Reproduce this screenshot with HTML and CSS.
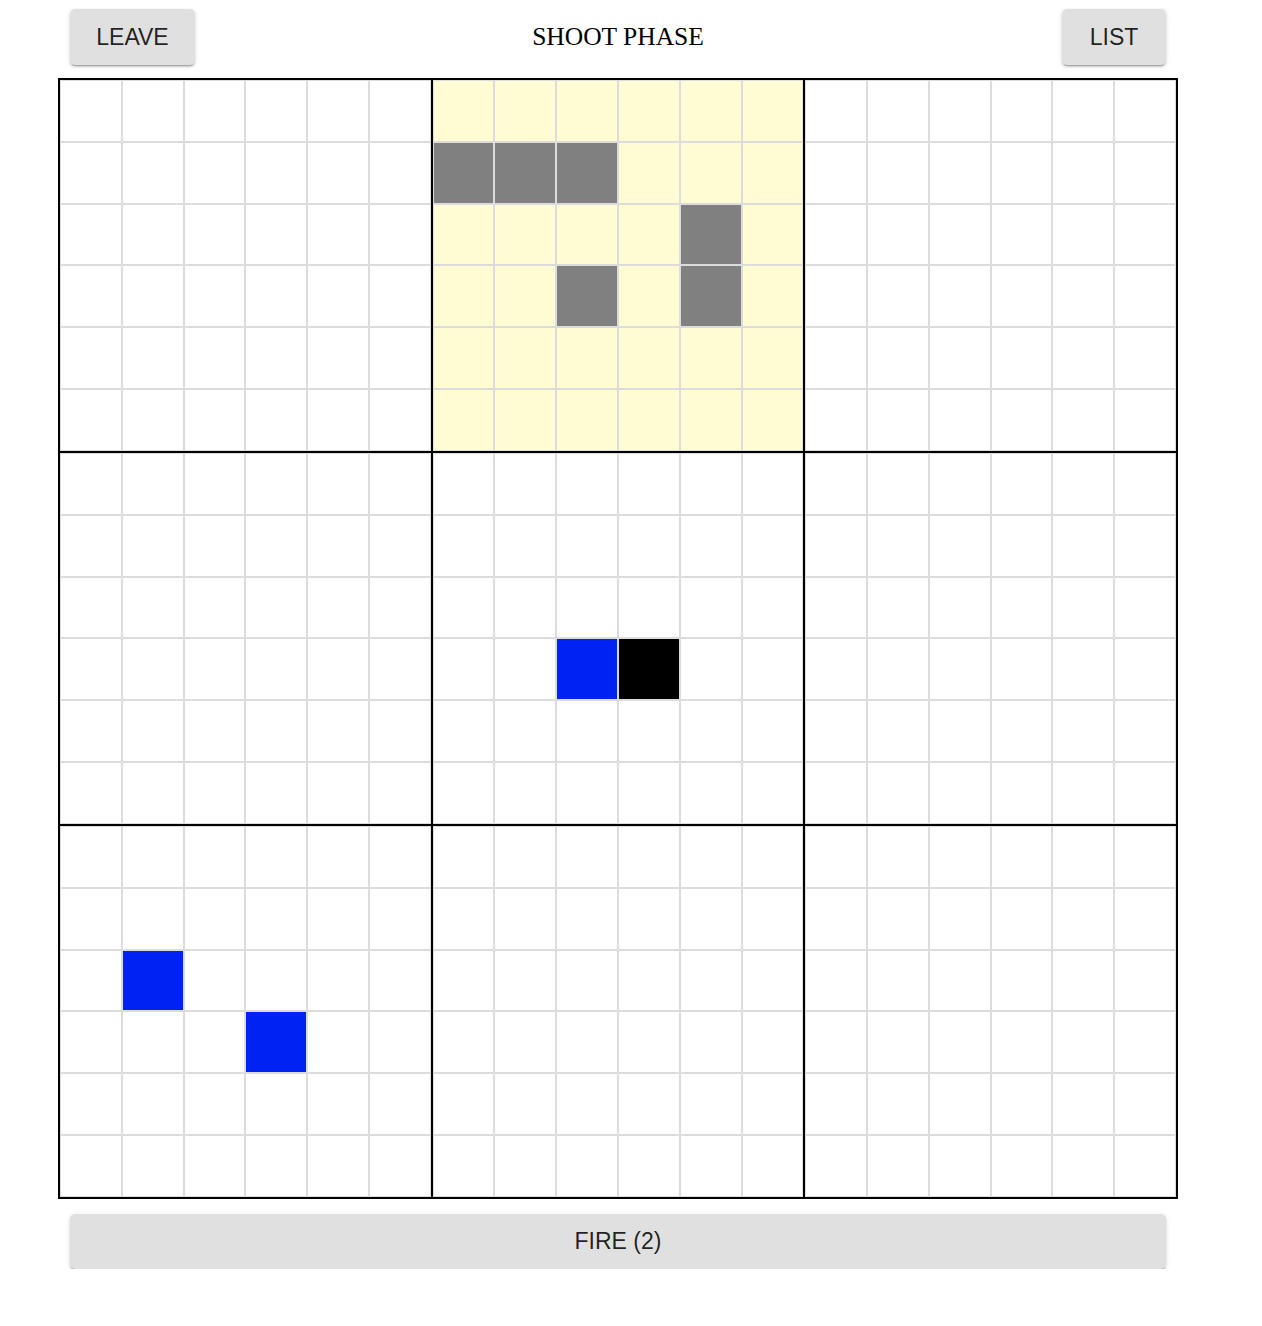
FILE: index.html
```html
<!DOCTYPE html>
<html>
<head>
<meta charset="utf-8">
<title>Shoot Phase</title>
<link rel="stylesheet" href="styles.css">
</head>
<body>
<div class="page">
  <div class="topbar">
    <button class="btn btn-leave">LEAVE</button>
    <div class="title">SHOOT PHASE</div>
    <button class="btn btn-list">LIST</button>
  </div>
  <div class="board">
    <div class="block">
      <div class="c"></div><div class="c"></div><div class="c"></div><div class="c"></div><div class="c"></div><div class="c"></div>
      <div class="c"></div><div class="c"></div><div class="c"></div><div class="c"></div><div class="c"></div><div class="c"></div>
      <div class="c"></div><div class="c"></div><div class="c"></div><div class="c"></div><div class="c"></div><div class="c"></div>
      <div class="c"></div><div class="c"></div><div class="c"></div><div class="c"></div><div class="c"></div><div class="c"></div>
      <div class="c"></div><div class="c"></div><div class="c"></div><div class="c"></div><div class="c"></div><div class="c"></div>
      <div class="c"></div><div class="c"></div><div class="c"></div><div class="c"></div><div class="c"></div><div class="c"></div>
    </div>
    <div class="block block-active">
      <div class="c"></div><div class="c"></div><div class="c"></div><div class="c"></div><div class="c"></div><div class="c"></div>
      <div class="c gray"></div><div class="c gray"></div><div class="c gray"></div><div class="c"></div><div class="c"></div><div class="c"></div>
      <div class="c"></div><div class="c"></div><div class="c"></div><div class="c"></div><div class="c gray"></div><div class="c"></div>
      <div class="c"></div><div class="c"></div><div class="c gray"></div><div class="c"></div><div class="c gray"></div><div class="c"></div>
      <div class="c"></div><div class="c"></div><div class="c"></div><div class="c"></div><div class="c"></div><div class="c"></div>
      <div class="c"></div><div class="c"></div><div class="c"></div><div class="c"></div><div class="c"></div><div class="c"></div>
    </div>
    <div class="block">
      <div class="c"></div><div class="c"></div><div class="c"></div><div class="c"></div><div class="c"></div><div class="c"></div>
      <div class="c"></div><div class="c"></div><div class="c"></div><div class="c"></div><div class="c"></div><div class="c"></div>
      <div class="c"></div><div class="c"></div><div class="c"></div><div class="c"></div><div class="c"></div><div class="c"></div>
      <div class="c"></div><div class="c"></div><div class="c"></div><div class="c"></div><div class="c"></div><div class="c"></div>
      <div class="c"></div><div class="c"></div><div class="c"></div><div class="c"></div><div class="c"></div><div class="c"></div>
      <div class="c"></div><div class="c"></div><div class="c"></div><div class="c"></div><div class="c"></div><div class="c"></div>
    </div>
    <div class="block">
      <div class="c"></div><div class="c"></div><div class="c"></div><div class="c"></div><div class="c"></div><div class="c"></div>
      <div class="c"></div><div class="c"></div><div class="c"></div><div class="c"></div><div class="c"></div><div class="c"></div>
      <div class="c"></div><div class="c"></div><div class="c"></div><div class="c"></div><div class="c"></div><div class="c"></div>
      <div class="c"></div><div class="c"></div><div class="c"></div><div class="c"></div><div class="c"></div><div class="c"></div>
      <div class="c"></div><div class="c"></div><div class="c"></div><div class="c"></div><div class="c"></div><div class="c"></div>
      <div class="c"></div><div class="c"></div><div class="c"></div><div class="c"></div><div class="c"></div><div class="c"></div>
    </div>
    <div class="block">
      <div class="c"></div><div class="c"></div><div class="c"></div><div class="c"></div><div class="c"></div><div class="c"></div>
      <div class="c"></div><div class="c"></div><div class="c"></div><div class="c"></div><div class="c"></div><div class="c"></div>
      <div class="c"></div><div class="c"></div><div class="c"></div><div class="c"></div><div class="c"></div><div class="c"></div>
      <div class="c"></div><div class="c"></div><div class="c blue"></div><div class="c black"></div><div class="c"></div><div class="c"></div>
      <div class="c"></div><div class="c"></div><div class="c"></div><div class="c"></div><div class="c"></div><div class="c"></div>
      <div class="c"></div><div class="c"></div><div class="c"></div><div class="c"></div><div class="c"></div><div class="c"></div>
    </div>
    <div class="block">
      <div class="c"></div><div class="c"></div><div class="c"></div><div class="c"></div><div class="c"></div><div class="c"></div>
      <div class="c"></div><div class="c"></div><div class="c"></div><div class="c"></div><div class="c"></div><div class="c"></div>
      <div class="c"></div><div class="c"></div><div class="c"></div><div class="c"></div><div class="c"></div><div class="c"></div>
      <div class="c"></div><div class="c"></div><div class="c"></div><div class="c"></div><div class="c"></div><div class="c"></div>
      <div class="c"></div><div class="c"></div><div class="c"></div><div class="c"></div><div class="c"></div><div class="c"></div>
      <div class="c"></div><div class="c"></div><div class="c"></div><div class="c"></div><div class="c"></div><div class="c"></div>
    </div>
    <div class="block">
      <div class="c"></div><div class="c"></div><div class="c"></div><div class="c"></div><div class="c"></div><div class="c"></div>
      <div class="c"></div><div class="c"></div><div class="c"></div><div class="c"></div><div class="c"></div><div class="c"></div>
      <div class="c"></div><div class="c blue"></div><div class="c"></div><div class="c"></div><div class="c"></div><div class="c"></div>
      <div class="c"></div><div class="c"></div><div class="c"></div><div class="c blue"></div><div class="c"></div><div class="c"></div>
      <div class="c"></div><div class="c"></div><div class="c"></div><div class="c"></div><div class="c"></div><div class="c"></div>
      <div class="c"></div><div class="c"></div><div class="c"></div><div class="c"></div><div class="c"></div><div class="c"></div>
    </div>
    <div class="block">
      <div class="c"></div><div class="c"></div><div class="c"></div><div class="c"></div><div class="c"></div><div class="c"></div>
      <div class="c"></div><div class="c"></div><div class="c"></div><div class="c"></div><div class="c"></div><div class="c"></div>
      <div class="c"></div><div class="c"></div><div class="c"></div><div class="c"></div><div class="c"></div><div class="c"></div>
      <div class="c"></div><div class="c"></div><div class="c"></div><div class="c"></div><div class="c"></div><div class="c"></div>
      <div class="c"></div><div class="c"></div><div class="c"></div><div class="c"></div><div class="c"></div><div class="c"></div>
      <div class="c"></div><div class="c"></div><div class="c"></div><div class="c"></div><div class="c"></div><div class="c"></div>
    </div>
    <div class="block">
      <div class="c"></div><div class="c"></div><div class="c"></div><div class="c"></div><div class="c"></div><div class="c"></div>
      <div class="c"></div><div class="c"></div><div class="c"></div><div class="c"></div><div class="c"></div><div class="c"></div>
      <div class="c"></div><div class="c"></div><div class="c"></div><div class="c"></div><div class="c"></div><div class="c"></div>
      <div class="c"></div><div class="c"></div><div class="c"></div><div class="c"></div><div class="c"></div><div class="c"></div>
      <div class="c"></div><div class="c"></div><div class="c"></div><div class="c"></div><div class="c"></div><div class="c"></div>
      <div class="c"></div><div class="c"></div><div class="c"></div><div class="c"></div><div class="c"></div><div class="c"></div>
    </div>
  </div>
  <div class="bottombar">
    <button class="btn btn-fire">FIRE (2)</button>
  </div>
</div>
</body>
</html>
```

FILE: styles.css
```css
* { box-sizing: border-box; }

body {
  margin: 8px;
  background: #fff;
}

.page {
  margin-left: 50px;
  width: 1120px;
}

.topbar {
  height: 70px;
  display: grid;
  grid-template-columns: 1fr auto 1fr;
  align-items: start;
  padding: 1px 12px 0;
}

.title {
  font-family: "Liberation Serif", "Times New Roman", serif;
  font-size: 25.5px;
  line-height: 56px;
  color: #000;
  text-align: center;
}

.btn {
  font-family: "Liberation Sans", Arial, sans-serif;
  font-size: 23px;
  color: rgba(0, 0, 0, 0.87);
  background: #e0e0e0;
  border: 0;
  border-radius: 5px;
  height: 56px;
  padding: 0;
  box-shadow: 0 3px 1px -2px rgba(0,0,0,0.2), 0 2px 2px 0 rgba(0,0,0,0.14), 0 1px 5px 0 rgba(0,0,0,0.12);
}

.btn-leave { width: 125px; justify-self: start; }
.btn-list { width: 104px; justify-self: end; }

.board {
  width: 1120px;
  border: 1px solid #000;
  display: grid;
  grid-template-columns: repeat(3, 1fr);
  grid-auto-rows: 373px;
}

.block {
  border: 1px solid #000;
  display: grid;
  grid-template-columns: repeat(6, 1fr);
  grid-template-rows: repeat(6, 1fr);
  background: #fff;
}

.block-active { background: #fffcd3; }

.c {
  border: 1px solid #dcdcdc;
}

.c.gray { background: #808080; }
.c.blue { background: #0022f2; }
.c.black { background: #000; }

.bottombar {
  padding: 15px 12px 0;
}

.btn-fire {
  width: 100%;
  height: 55px;
}
```
